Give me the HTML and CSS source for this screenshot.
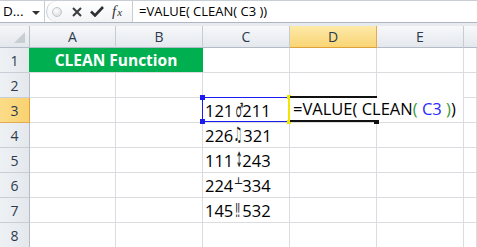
FILE: index.html
```html
<!DOCTYPE html>
<html>
<head>
<meta charset="utf-8">
<link rel="stylesheet" href="styles.css">
</head>
<body>
<div class="fbar">
  <div class="namebox"><span class="nb-text">D...</span><span class="caret"></span></div>
  <div class="tools">
    <span class="grip"></span>
    <svg class="ico ico-x" width="10" height="10" viewBox="0 0 10 10"><path d="M1 1 L9 9 M9 1 L1 9" stroke="#3c3c3c" stroke-width="2" fill="none"/></svg>
    <svg class="ico ico-check" width="14" height="11" viewBox="0 0 14 11"><path d="M1 5.5 L5 9.5 L13 1" stroke="#2f2f2f" stroke-width="2.6" fill="none"/></svg>
    <span class="fx"><span class="fx-f">f</span><span class="fx-x">x</span></span>
  </div>
  <div class="formula">=VALUE( CLEAN( C3 ))</div>
</div>
<div class="band"></div>
<div class="sheet">
  <div class="grid">
    <div class="corner"><span class="tri"></span></div>
    <div class="h">A</div>
    <div class="h">B</div>
    <div class="h">C</div>
    <div class="h h-sel">D</div>
    <div class="h">E</div>
    <div class="h h-last"></div>

    <div class="rh">1</div>
    <div class="title">CLEAN Function</div>
    <div class="c"></div><div class="c"></div><div class="c"></div><div class="c"></div>

    <div class="rh">2</div>
    <div class="c"></div><div class="c"></div><div class="c"></div><div class="c"></div><div class="c"></div><div class="c"></div>

    <div class="rh rh-sel">3</div>
    <div class="c"></div><div class="c"></div><div class="c num">121<span class="s-male">♂</span>211</div><div class="c"></div><div class="c"></div><div class="c"></div>

    <div class="rh">4</div>
    <div class="c"></div><div class="c"></div><div class="c num">226<span class="s-note">♫</span>321</div><div class="c"></div><div class="c"></div><div class="c"></div>

    <div class="rh">5</div>
    <div class="c"></div><div class="c"></div><div class="c num">111<span class="s-arrow">↕</span>243</div><div class="c"></div><div class="c"></div><div class="c"></div>

    <div class="rh">6</div>
    <div class="c"></div><div class="c"></div><div class="c num">224<span class="s-tee">┴</span>334</div><div class="c"></div><div class="c"></div><div class="c"></div>

    <div class="rh">7</div>
    <div class="c"></div><div class="c"></div><div class="c num">145<span class="s-bang">‼</span>532</div><div class="c"></div><div class="c"></div><div class="c"></div>

    <div class="rh">8</div>
    <div class="c"></div><div class="c"></div><div class="c"></div><div class="c"></div><div class="c"></div><div class="c"></div>
  </div>

  <div class="refbox">
    <span class="hd hd-tl"></span>
    <span class="hd hd-bl"></span>
    <span class="yline"></span>
    <span class="hd hd-tr"></span>
    <span class="hd hd-br"></span>
  </div>

  <div class="edit">
    <div class="edit-frame"><span class="fill"></span></div>
    <div class="edit-text">=VALUE( CLEAN<span class="g">(</span> <span class="b">C3</span> <span class="g">)</span>)</div>
  </div>
</div>
</body>
</html>
```
FILE: styles.css
```css
html, body {
  margin: 0;
  padding: 0;
  background: #ffffff;
}
body {
  width: 477px;
  height: 247px;
  overflow: hidden;
  font-family: "Open Sans", "Noto Sans", "DejaVu Sans", sans-serif;
  color: #000;
}

/* ---------- formula bar ---------- */
.fbar {
  display: flex;
  height: 23px;
  box-sizing: border-box;
  border-top: 1px solid #c9ced5;
  border-bottom: 1px solid #aeb6c0;
  background: #ffffff;
}
.namebox {
  width: 45px;
  box-sizing: border-box;
  border-right: 1px solid #c8cdd3;
  display: flex;
  align-items: center;
  padding-left: 3px;
  font-size: 13.5px;
  line-height: 21px;
}
.caret {
  width: 0;
  height: 0;
  border-left: 4px solid transparent;
  border-right: 4px solid transparent;
  border-top: 4px solid #333;
  margin-left: 9px;
  margin-top: 2px;
}
.tools {
  width: 87px;
  box-sizing: border-box;
  display: flex;
  align-items: center;
  border-left: 1px solid #c8cdd3;
  border-right: 1px solid #c8cdd3;
  border-radius: 11px 0 0 11px;
  margin-left: 1px;
  background: linear-gradient(#ffffff, #f3f4f6);
}
.grip {
  width: 10px;
  height: 10px;
  border-radius: 50%;
  box-sizing: border-box;
  border: 1px solid #c3c7cc;
  background: radial-gradient(circle at 40% 35%, #ffffff, #d3d6da);
  margin-left: 5px;
}
.ico-x {
  margin-left: 10px;
}
.ico-check {
  margin-left: 8px;
}
.fx {
  margin-left: 8px;
  font-family: "Liberation Serif", "DejaVu Serif", serif;
  font-style: italic;
  color: #333;
  font-size: 15px;
  line-height: 1;
  display: flex;
  align-items: baseline;
}
.fx-x {
  font-size: 11px;
  margin-left: 1px;
}
.formula {
  flex: 1;
  padding-left: 6px;
  font-size: 13px;
  line-height: 21px;
}

.band {
  height: 3px;
  background: #e7eaee;
}

/* ---------- sheet ---------- */
.sheet {
  position: relative;
}
.grid {
  display: grid;
  grid-template-columns: 30px 86px 87px 87px 87px 87px 1fr;
  grid-template-rows: 22px repeat(8, 25px);
}
.corner {
  position: relative;
  box-sizing: border-box;
  background: linear-gradient(#f5f6f8, #e3e7ec);
  border-right: 1px solid #b9c1cb;
  border-bottom: 1px solid #b3bcc6;
}
.tri {
  position: absolute;
  right: 4px;
  bottom: 4px;
  width: 0;
  height: 0;
  border-left: 11px solid transparent;
  border-bottom: 11px solid #c9ced4;
}
.h {
  box-sizing: border-box;
  background: linear-gradient(#f7f8fa, #e4e8ed);
  border-right: 1px solid #c5ccd4;
  border-bottom: 1px solid #b3bcc6;
  display: flex;
  align-items: center;
  justify-content: center;
  font-size: 14px;
  color: #2d3a4d;
  line-height: 21px;
}
.h-sel {
  background: linear-gradient(#fde9a9, #f9d574);
  border-right: 1px solid #e2aa55;
  border-bottom: 1px solid #e0a13c;
}
.h-last {
  border-right: none;
}
.rh {
  box-sizing: border-box;
  background: linear-gradient(90deg, #eef1f4, #e4e8ed);
  border-right: 1px solid #b3bcc6;
  border-bottom: 1px solid #c8ced6;
  display: flex;
  align-items: center;
  justify-content: center;
  font-size: 14px;
  color: #2d3a4d;
  padding-top: 1px;
}
.rh-sel {
  background: linear-gradient(90deg, #fbdc87, #f9d272);
  border-right: 1px solid #e0a13c;
  border-bottom: 1px solid #e2aa55;
}
.c {
  box-sizing: border-box;
  border-right: 1px solid #dadcdf;
  border-bottom: 1px solid #dadcdf;
}
.title {
  grid-column: span 2;
  box-sizing: border-box;
  background: #00b050;
  border-bottom: 1px solid #dadcdf;
  color: #ffffff;
  font-weight: 700;
  font-size: 15.5px;
  display: flex;
  align-items: center;
  justify-content: center;
  margin-left: -1px;
}
.num {
  font-size: 16.5px;
  display: flex;
  align-items: flex-end;
  padding-left: 2px;
  line-height: 22px;
  white-space: nowrap;
}
.num span {
  font-family: "DejaVu Sans", sans-serif;
  display: inline-block;
  text-align: center;
  width: 9px;
  font-size: 21px;
  line-height: 22px;
  height: 22px;
  color: #1a1a1a;
}
.s-male {
  transform: translateY(-1px) scale(0.42, 0.95);
}
.num .s-note {
  font-size: 11px;
  width: 10px;
  transform: translateY(0px) scale(0.85, 1.8);
}
.s-arrow {
  transform: translateY(-1px) scale(0.38, 1);
}
.s-tee {
  transform: translateY(-3px) scale(0.55, 0.5);
}
.s-bang {
  transform: translateY(-1px) scale(0.42, 0.95);
}

/* ---------- reference highlight (C3) ---------- */
.refbox {
  position: absolute;
  left: 202px;
  top: 71px;
  width: 86px;
  height: 25px;
  box-sizing: border-box;
  border: 1px solid #1c1cf0;
  border-right: none;
}
.yline {
  position: absolute;
  right: -2px;
  top: -1px;
  width: 2px;
  height: 26px;
  background: #f1e600;
}
.hd {
  position: absolute;
  width: 5px;
  height: 5px;
  background: #1c1cf0;
}
.hd-tl { left: -3px; top: -3px; }
.hd-bl { left: -3px; bottom: -3px; }
.hd-tr { right: -3px; top: -3px; background: #f1e600; width: 4px; height: 4px; }
.hd-br { right: -3px; bottom: -3px; background: #f1e600; width: 4px; height: 4px; }

/* ---------- editing cell (D3) ---------- */
.edit {
  position: absolute;
  left: 290px;
  top: 70px;
  width: 173px;
  height: 26px;
  background: #ffffff;
}
.edit-frame {
  position: absolute;
  left: 0;
  top: 0;
  width: 87px;
  height: 26px;
  box-sizing: border-box;
  border-top: 2px solid #111;
  border-bottom: 2px solid #111;
}
.fill {
  position: absolute;
  right: -2px;
  bottom: -4px;
  width: 5px;
  height: 4px;
  background: #111;
}
.edit-text {
  position: absolute;
  left: 3px;
  bottom: 2px;
  font-size: 16.5px;
  line-height: 22px;
  white-space: nowrap;
}
.g { color: #3a9a3a; }
.b { color: #2b2bff; }
```
